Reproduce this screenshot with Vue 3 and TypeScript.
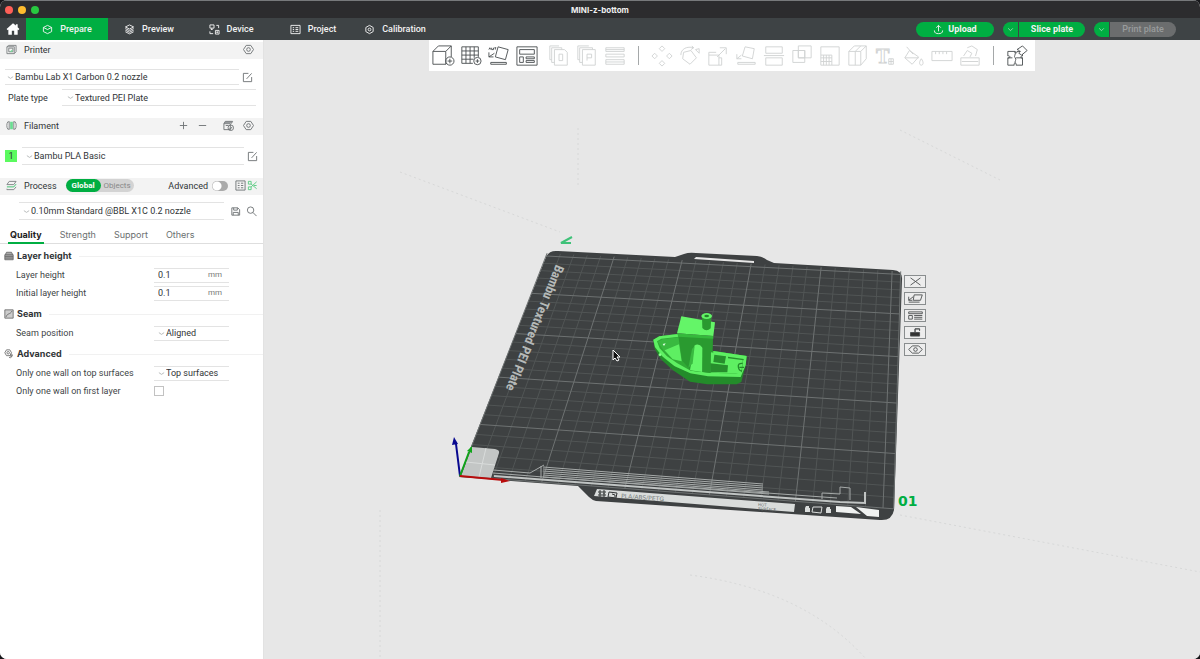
<script setup lang="ts">
import { ref } from 'vue'

interface Icon {
  name: string
  d: string
  fill?: string
  letter?: string
}

const mainTabs: Icon[] = [
  { name: 'Prepare', d: 'M12 3 21 7.5V16.500L12 21 3 16.500V7.500ZM3 7.500 12 12 21 7.500' },
  { name: 'Preview', d: 'M12 2 21 6.500 12 11 3 6.500ZM3 10 12 14.500 21 10M3 13.500 12 18 21 13.500M3 17 12 21.500 21 17' },
  { name: 'Device', d: 'M2 2H11V9H2ZM14 14H22V22H14ZM6 9V12M16 3H21V9M2 16V21H9M17 17H19V19H17ZM4 12H8' },
  { name: 'Project', d: 'M2 3H22V21H2ZM6 8H9M6 12H9M6 16H9M12 8H18M12 12H18M12 16H18' },
  { name: 'Calibration', d: 'M12 3 20 7.500V16.500L12 21 4 16.500V7.500ZM12 9A3 3 0 1 0 12 15A3 3 0 1 0 12 9Z' },
]
const activeTab = ref('Prepare')

const createTools: Icon[] = [
  { name: 'Add model', d: 'M1 7H15V21H1ZM1 7 7 1H21L15 7M21 1V13M15 21 16 20M19.500 13A4.500 4.500 0 1 0 19.500 22A4.500 4.500 0 1 0 19.500 13ZM19.500 15V20M17 17.500H22' },
  { name: 'Add plate', d: 'M2 2H20V13M2 2V20H14M2 6.500H20M2 11H20M2 15.500H15M6.500 2V20M11 2V20M15.500 2V14M19 13.500A4 4 0 1 0 19 21.500A4 4 0 1 0 19 13.500ZM19 15.500V19.500M17 17.500H21' },
  { name: 'Auto orient', d: 'M11 2 22 5 19 16 8 13ZM1 8V13H6M1 13 7 9M3 19H20V21H3ZM1 5 2 3 3 5M4 3V5H6V3M7 3H9M8 3V5' },
  { name: 'Arrange all', d: 'M1 2H23V22H1ZM4 5H20V10H4ZM4 13H8V19H4ZM11 13H20V15H11ZM11 17H20V19H11Z' },
]
const editTools: Icon[] = [
  { name: 'Copy', d: 'M7 5H18L21 8V22H7ZM7 19H4V3H15V5M4 16H2V1H12M12 10H16V17H12Z' },
  { name: 'Paste', d: 'M7 5H21V22H7ZM7 19H4V3H18V5M4 16H2V1H14M12 17V10H17V14H12' },
  { name: 'Layers', d: 'M2 3H22V7H2ZM2 10H22V13H2ZM2 16H22V21H2ZM2 18.500H22M2 5H22' },
]
const modelTools: Icon[] = [
  { name: 'Move', d: 'M12 1 15 4 12 7 9 4ZM12 17 15 20 12 23 9 20ZM4 9 7 12 4 15 1 12ZM20 9 23 12 20 15 17 12Z' },
  { name: 'Rotate', d: 'M5 8 13 6 19 14 12 21 4 15ZM2 11C2 4 9 1 16 3L14 1M16 3 13 5M18 5 22 4V9Z' },
  { name: 'Scale', d: 'M2 11H13V22H2ZM2 11V8H10M13 14H16V22H13M11 13 20 4M14 3H21V10' },
  { name: 'Lay flat', d: 'M11 2 21 4 19 15 8 12ZM2 10V15H7M2 15 7 11M3 19H22V21H3Z' },
  { name: 'Cut', d: 'M3 2H21V9H3ZM3 14H21V22H3ZM1 11.500H23' },
  { name: 'Boolean', d: 'M2 6H15V19H2ZM8 1H22V14H8ZM8 6H15V14H8Z' },
  { name: 'Supports', d: 'M2 2H22V22H14V11H2ZM2 11V22H14M5 11V22M8 11V22M11 11V22M2 14H14M2 18H14' },
  { name: 'Seam', d: 'M2 7H15V22H2ZM2 7 8 1H21L15 7M21 1V15L15 22M9 7V22M9 7 15 1' },
  { name: 'Text shape', d: 'M15 15H20V21H15ZM15 18H20M17.500 15V21', letter: 'T' },
  { name: 'Paint', d: 'M7 6 17 13 10 21 2 14ZM4 2 11 10M2 14H17M20 15C23 19 22 22 20 22S17 19 20 15Z' },
  { name: 'Measure', d: 'M1 7H23V17H1ZM5 7V10M9 7V10M13 7V10M17 7V10' },
  { name: 'Assembly tools', d: 'M2 14H22V22H2ZM3 18H21M5 12 9 6 14 9 12 13M9 3 14 1 20 5 18 12' },
]
const assembly: Icon = {
  name: 'Assembly view',
  d: 'M2 7H10C9 9 12 10 12 7H16M2 7V12C5 11 5 15 2 14V22H9C8 19 12 19 11 22H18V14C16 15 15 12 18 12V10M10 7C11 11 8 12 10 14C12 16 9 18 10 20M2 14H7M11 14H18M12 5 18 1 23 6 17 11 14 9C16 7 14 5 12 5Z',
}

const parameterTabs = ['Quality', 'Strength', 'Support', 'Others']
const parameterTab = ref('Quality')
const advanced = ref(false)
const oneWallFirst = ref(false)
const layerHeight = ref('0.1')
const initialHeight = ref('0.1')

type Point = [number, number]

// Build plate corners on screen: front left, front right, back right, back left.
const corners: Point[] = [[460, 476], [883, 508], [892, 274], [546, 256]]
const plateSize = 250

function project(mx: number, my: number): Point {
  const [a, b, c, d] = corners
  const u = mx / plateSize
  const v = my / plateSize
  const dx1 = b[0] - c[0]
  const dy1 = b[1] - c[1]
  const dx2 = d[0] - c[0]
  const dy2 = d[1] - c[1]
  const sx = a[0] - b[0] + c[0] - d[0]
  const sy = a[1] - b[1] + c[1] - d[1]
  const det = dx1 * dy2 - dx2 * dy1
  const g = (sx * dy2 - dx2 * sy) / det
  const h = (dx1 * sy - sx * dy1) / det
  const w = g * u + h * v + 1
  return [
    ((b[0] - a[0] + g * b[0]) * u + (d[0] - a[0] + h * d[0]) * v + a[0]) / w,
    ((b[1] - a[1] + g * b[1]) * u + (d[1] - a[1] + h * d[1]) * v + a[1]) / w,
  ]
}

function segment(x1: number, y1: number, x2: number, y2: number): string {
  return `M${project(x1, y1).join(' ')}L${project(x2, y2).join(' ')}`
}

function gridPath(major: boolean): string {
  let path = ''
  for (let i = 0; i <= plateSize; i += 10) {
    if ((i % 50 === 0) === major) {
      path += segment(i, 0, i, 254) + segment(0, i, 256, i)
    }
  }
  return path
}
const majorGrid = gridPath(true) + segment(256, 0, 256, 254)
const minorGrid = gridPath(false)
const stripes = [0, 1, 2, 3, 4, 5]

const plateTools: Icon[] = [
  { name: 'Remove plate', d: 'M5 2 16 10M16 2 5 10' },
  { name: 'Orient plate', d: 'M9 2H18L16 8H8ZM3 4V8H7M3 8 8 4M3 10H15' },
  { name: 'Arrange plate', d: 'M3 2H18V4H3ZM3 6H7V10H3ZM9 6H18M9 8H18M9 10H18' },
  { name: 'Lock plate', d: 'M5 6H15V10H5ZM10 6V2H15V4V2H10Z', fill: '#333' },
  { name: 'Plate settings', d: 'M7 2H14L18 6 14 10H7L3 6ZM10.500 4A2 2 0 1 0 10.500 8A2 2 0 1 0 10.500 4Z' },
]
</script>

<template>
  <div class="window">
    <header class="titlebar">
      <span class="lights"><i class="red"></i><i class="amber"></i><i class="lime"></i></span>
      <h1>MINI-z-bottom</h1>
    </header>

    <nav class="menubar">
      <button class="home" aria-label="Home">
        <svg viewBox="0 0 24 24"><path d="M12 2 1 12 3 14 4 13V22H10V15H14V22H20V13L21 14 23 12 20 9V4H17V6Z" fill="#fff" /></svg>
      </button>
      <button
        v-for="tab in mainTabs"
        :key="tab.name"
        class="main-tab"
        :class="{ active: activeTab === tab.name }"
        @click="activeTab = tab.name"
      >
        <svg class="line-icon" viewBox="0 0 24 24"><path :d="tab.d" /></svg>{{ tab.name }}
      </button>
      <div class="actions">
        <button class="pill upload">
          <svg class="line-icon" viewBox="0 0 24 24"><path d="M12 16V3M7 8 12 3 17 8M3 14C3 20 7 21 12 21S21 20 21 14" /></svg>Upload
        </button>
        <div class="split">
          <button class="arrow" aria-label="Slice options"><svg class="line-icon" viewBox="0 0 12 12"><path d="M2 4 6 8 10 4" /></svg></button>
          <button class="main">Slice plate</button>
        </div>
        <div class="split">
          <button class="arrow" aria-label="Print options"><svg class="line-icon" viewBox="0 0 12 12"><path d="M2 4 6 8 10 4" /></svg></button>
          <button class="main" disabled>Print plate</button>
        </div>
      </div>
    </nav>

    <div class="body">
      <aside class="sidebar">
        <div class="section-head">
          <svg class="head-icon" viewBox="0 0 24 24"><path d="M2 6H18V21H2ZM2 6 6 3H22V17L18 21M6 9H15V17H6Z" /><path class="accent" d="M8 17 14 12V17Z" /></svg>
          <h2>Printer</h2>
          <button class="icon-button push" aria-label="Printer settings">
            <svg viewBox="0 0 24 24"><path d="M7 3H17L23 12 17 21H7L1 12ZM12 8A4 4 0 1 0 12 16A4 4 0 1 0 12 8Z" /></svg>
          </button>
        </div>
        <div class="row printer">
          <label class="combo">
            <svg class="chevron" viewBox="0 0 8 8"><path d="M1 3 4 5 7 3" /></svg>
            <select aria-label="Printer"><option>Bambu Lab X1 Carbon 0.2 nozzle</option></select>
          </label>
          <button class="icon-button" aria-label="Edit printer">
            <svg viewBox="0 0 24 24"><path d="M14 3H3V21H21V11M10 15 21 3" /></svg>
          </button>
        </div>
        <div class="row plate">
          <label for="plate-type">Plate type</label>
          <span class="combo">
            <svg class="chevron" viewBox="0 0 8 8"><path d="M1 3 4 5 7 3" /></svg>
            <select id="plate-type"><option>Textured PEI Plate</option></select>
          </span>
        </div>

        <div class="section-head">
          <svg class="head-icon" viewBox="0 0 24 24"><path d="M4 4C1 8 1 16 4 20M20 4C23 8 23 16 20 20M7 3V21M17 3V21M4 4H7M4 20H7M17 4H20M17 20H20" /><path class="accent" d="M9 4H15V20H9Z" /></svg>
          <h2>Filament</h2>
          <button class="icon-button push" aria-label="Add filament"><svg viewBox="0 0 24 24"><path d="M12 4V20M4 12H20" /></svg></button>
          <button class="icon-button wide" aria-label="Remove filament"><svg viewBox="0 0 24 24"><path d="M4 12H20" /></svg></button>
          <button class="icon-button wider" aria-label="Sync filament">
            <svg viewBox="0 0 24 24"><path d="M2 8H16V21H2ZM2 8 5 3H21L18 8M4 5H19M6 12H12M17 11A6 6 0 1 0 17 23A6 6 0 1 0 17 11ZM14 18 16 20 20 15" /></svg>
          </button>
          <button class="icon-button" aria-label="Filament settings">
            <svg viewBox="0 0 24 24"><path d="M7 3H17L23 12 17 21H7L1 12ZM12 8A4 4 0 1 0 12 16A4 4 0 1 0 12 8Z" /></svg>
          </button>
        </div>
        <div class="row filament">
          <span class="swatch">1</span>
          <label class="combo">
            <svg class="chevron" viewBox="0 0 8 8"><path d="M1 3 4 5 7 3" /></svg>
            <select aria-label="Filament"><option>Bambu PLA Basic</option></select>
          </label>
          <button class="icon-button" aria-label="Edit filament">
            <svg viewBox="0 0 24 24"><path d="M14 3H3V21H21V11M10 15 21 3" /></svg>
          </button>
        </div>

        <div class="section-head">
          <svg class="head-icon" viewBox="0 0 24 24"><path d="M7 3H22L17 10H2ZM2 19V21H17L22 15" /><path class="accent-line" d="M2 15H17L22 9" /></svg>
          <h2>Process</h2>
          <div class="scope"><button class="on">Global</button><button>Objects</button></div>
          <label class="advanced push">Advanced<input v-model="advanced" type="checkbox" /></label>
          <button class="icon-button" aria-label="Parameter list">
            <svg viewBox="0 0 24 24"><path d="M2 2H22V22H2ZM6 7H10M6 12H10M6 17H10M13 7H18M13 12H18M13 17H18" /></svg>
          </button>
          <button class="icon-button compare" aria-label="Compare presets">
            <svg viewBox="0 0 24 24"><path d="M3 3H9V9H3ZM3 15H9V21H3ZM9 9 21 19M9 15 21 4M15 12H21" /></svg>
          </button>
        </div>
        <div class="row process">
          <label class="combo">
            <svg class="chevron" viewBox="0 0 8 8"><path d="M1 3 4 5 7 3" /></svg>
            <select aria-label="Process"><option>0.10mm Standard @BBL X1C 0.2 nozzle</option></select>
          </label>
          <button class="icon-button" aria-label="Save preset">
            <svg viewBox="0 0 24 24"><path d="M4 4H17L21 8V20H4ZM8 4V9H16V4M7 20V14H18V20" /></svg>
          </button>
          <button class="icon-button" aria-label="Search">
            <svg viewBox="0 0 24 24"><path d="M10 2A7 7 0 1 0 10 16A7 7 0 1 0 10 2ZM15 14 23 22" /></svg>
          </button>
        </div>

        <div class="parameter-tabs">
          <button
            v-for="tab in parameterTabs"
            :key="tab"
            :class="{ selected: parameterTab === tab }"
            @click="parameterTab = tab"
          >{{ tab }}</button>
        </div>

        <section class="group">
          <h3>
            <svg viewBox="0 0 24 24"><path d="M3 9 6 3H18L21 9M2 9H22V21H2Z" fill="#aaa" /><path d="M2 13H22M2 17H22" /></svg>
            Layer height
          </h3>
          <div class="field">
            <label for="layer-height">Layer height</label>
            <span class="value"><input id="layer-height" v-model="layerHeight" type="text" /><small>mm</small></span>
          </div>
          <div class="field">
            <label for="initial-height">Initial layer height</label>
            <span class="value"><input id="initial-height" v-model="initialHeight" type="text" /><small>mm</small></span>
          </div>
        </section>
        <section class="group">
          <h3>
            <svg viewBox="0 0 24 24"><path d="M2 2H22V22H2Z" fill="#ccc" /><path d="M5 19C8 9 15 14 19 5" /></svg>
            Seam
          </h3>
          <div class="field">
            <label for="seam">Seam position</label>
            <span class="value">
              <svg class="chevron" viewBox="0 0 8 8"><path d="M1 3 4 5 7 3" /></svg>
              <select id="seam"><option>Aligned</option></select>
            </span>
          </div>
        </section>
        <section class="group">
          <h3>
            <svg viewBox="0 0 24 24"><path d="M6 2H14L18 9 14 16H6L2 9ZM10 6A3 3 0 1 0 10 12A3 3 0 1 0 10 6ZM17 11A5 5 0 1 1 12 20M17 14A2 2 0 1 0 17 18A2 2 0 1 0 17 14Z" /></svg>
            Advanced
          </h3>
          <div class="field">
            <label for="one-wall-top">Only one wall on top surfaces</label>
            <span class="value">
              <svg class="chevron" viewBox="0 0 8 8"><path d="M1 3 4 5 7 3" /></svg>
              <select id="one-wall-top"><option>Top surfaces</option></select>
            </span>
          </div>
          <div class="field">
            <label for="one-wall-first">Only one wall on first layer</label>
            <input id="one-wall-first" v-model="oneWallFirst" class="tick" type="checkbox" />
          </div>
        </section>
      </aside>

      <main class="viewport">
        <svg class="scene" viewBox="264 40 936 619" preserveAspectRatio="xMidYMid meet">
          <g class="traces">
            <path d="M380 510V659M578 128V188M690 575Q805 590 866 659M900 130L1000 180M400 172L560 232M900 515L1200 572" />
          </g>

          <path
            class="plate-body"
            d="M459 477 546 257Q549 250 558 251L675 257 684 254Q689 252 696 253L757 256Q764 257 767 260L774 263 893 270Q903 271 902 280L894 510Q892 521 880 520L596 501Q592 500 589 497L578 486Z"
          />
          <path d="M696 257 754 261V263L694 259Z" fill="#e7e7e7" />
          <path class="grid-minor" :d="minorGrid" />
          <path class="grid-major" :d="majorGrid" />

          <path d="M472 447 495 449Q500 450 499 453L491 478 461 476Z" fill="#c3c6c5" />
          <path d="M466 462 495 465M486 448 479 477" stroke="#d9dcdb" fill="none" />

          <g class="prints">
            <path v-for="i in stripes" :key="i" :d="`M543 ${467 + i * 2}L${763 + (i > 3 ? 6 : 0)} ${484 + i * 2}`" />
            <path d="M493 470 530 473 544 465M493 473 543 477M541 466V478" />
            <path d="M494 476 840 502 865 503V492" class="thick" />
            <path d="M543 477 837 498M822 499V493L840 494V487L850 488V500" />
          </g>

          <path d="M597 489 795 504 794 512 594 496Z" fill="#d9dcdb" />
          <path d="M599 491H601V493H599ZM603 491H605V493H603ZM599 494H601V496H599ZM603 494H605V496H603ZM609 492 617 493 616 498 608 497ZM612 494 615 495V497" fill="none" stroke="#333637" />
          <text class="plate-label" transform="translate(621 498) rotate(4)">PLA/ABS/PETG</text>
          <text class="plate-note" transform="translate(758 506) rotate(4)">HOT</text>
          <text class="plate-note" transform="translate(758 510) rotate(4)">SURFACE</text>
          <path d="M806 506H809V508H810V512H805V508ZM827 507H830V509H831V513H826V509Z" fill="#d9dcdb" />
          <path d="M813 507 822 507 821 513 812 512Z" fill="none" stroke="#d9dcdb" />
          <path d="M836 506 851 507 861 514 836 512ZM856 507 879 510V517L867 516Z" fill="#eff1f0" />

          <text class="plate-name" transform="translate(556 264) rotate(112)">Bambu Textured PEI Plate</text>
          <text class="plate-number" x="898" y="506">01</text>
          <path d="M572 237 561 243 571 243" class="mark" />

          <g class="boat" transform="translate(640 300) scale(.33333)">
            <path d="M40 119 58 109 112 102 220 153 320 168 317 196 304 246 290 253 202 253 150 245 99 211 62 177 44 146Z" fill="#238b2a" />
            <path d="M40 119 45 142 72 175 108 201 155 220 209 225 304 222 317 190 320 168 220 153 112 103 58 109Z" fill="#30aa35" />
            <path d="M40 119 58 109 114 102 116 110 64 116 51 124 59 145 81 169 112 190 152 212 215 218 288 221 306 216 309 178 220 164 220 153 320 168 317 196 302 231 204 229 151 220 103 198 66 168 45 141Z" fill="#5eef62" />
            <path d="M53 125 69 118 117 112 126 182 101 177 72 153Z" fill="#39b940" />
            <path d="M74 151 117 133 125 184 98 178Z" fill="#5eef62" />
            <path d="M114 101 219 109 216 219 152 212 126 181Z" fill="#2a9a30" />
            <path d="M163 137Q176 128 188 144L187 216 150 211Z" fill="#65f66a" />
            <path d="M156 147 164 138 158 190 145 204Z" fill="#39b940" />
            <path d="M188 112 218 114 213 218 187 216Z" fill="#2a9a30" />
            <path d="M213 157 309 174 303 221 212 218Z" fill="#5eef62" />
            <path d="M223 164 258 169 254 191 220 186Z" fill="#278e2d" />
            <path d="M211 190 264 196 262 217 211 217Z" fill="#278e2d" />
            <path d="M264 170 311 177V181L264 175Z" fill="#278e2d" />
            <path d="M308 190Q293 189 295 201T306 213M298 202H312" stroke="#238b2a" stroke-width="4" fill="none" />
            <path d="M124 49 225 67 220 108 111 100Z" fill="#64f568" />
            <path d="M111 100 220 108 220 116 115 110Z" fill="#35b93c" />
            <path d="M186 47 214 49 212 85Q199 97 187 84Z" fill="#2a9a30" />
            <ellipse cx="200" cy="48" rx="16" ry="9" fill="#63f467" />
            <ellipse cx="200" cy="48" rx="7" ry="4" fill="#24832a" />
            <path d="M68 132 77 130 72 138Z" fill="#dfffe0" />
            <circle cx="60" cy="164" r="4" fill="#88ff8c" />
          </g>

          <g class="axes">
            <path d="M460 476 456 444" stroke="#08088f" /><path d="M454 437 458 444 452 445Z" fill="#08088f" />
            <path d="M460 476 469 452" stroke="#10a51a" /><path d="M472 446 472 453 467 451Z" fill="#10a51a" />
            <path d="M460 476 503 480" stroke="#b80b0b" /><path d="M510 481 501 483V478Z" fill="#b80b0b" />
          </g>
          <path d="M613 350V360L615 358 617 361 619 360 617 357H620Z" fill="#111" stroke="#fff" />

          <foreignObject x="902" y="274" width="28" height="88">
            <div class="plate-tools">
              <button v-for="tool in plateTools" :key="tool.name" :aria-label="tool.name">
                <svg viewBox="0 0 21 12"><path :d="tool.d" :fill="tool.fill ?? 'none'" /></svg>
              </button>
            </div>
          </foreignObject>
        </svg>

        <div class="toolbar">
          <button v-for="tool in createTools" :key="tool.name" :aria-label="tool.name">
            <svg viewBox="0 0 24 24"><path :d="tool.d" /></svg>
          </button>
          <span class="space"></span>
          <button v-for="tool in editTools" :key="tool.name" :aria-label="tool.name" disabled>
            <svg viewBox="0 0 24 24"><path :d="tool.d" /></svg>
          </button>
          <span class="divider"></span>
          <button v-for="tool in modelTools" :key="tool.name" :aria-label="tool.name" disabled>
            <svg viewBox="0 0 24 24"><path :d="tool.d" /><text v-if="tool.letter" x="1" y="20">{{ tool.letter }}</text></svg>
          </button>
          <span class="divider"></span>
          <button :aria-label="assembly.name"><svg viewBox="0 0 24 24"><path :d="assembly.d" /></svg></button>
        </div>
      </main>
    </div>
  </div>
</template>

<style>
body {
  margin: 0;
  background: #17171a;
}
</style>

<style scoped>
.window {
  display: flex;
  flex-direction: column;
  min-height: 100vh;
  box-sizing: border-box;
  overflow: hidden;
  border-radius: 7px;
  background: #fff;
  color: #303436;
  font: 9px/12px Roboto, "Liberation Sans", sans-serif;
}
button, select, input {
  font: inherit;
  color: inherit;
  margin: 0;
  padding: 0;
  border: 0;
  background: none;
}
button { display: flex; align-items: center; justify-content: center; }
svg { display: block; flex: none; }
h1, h2, h3 { margin: 0; font-size: 9px; line-height: 12px; }
h2 { font-weight: 400; }

.titlebar {
  display: grid;
  grid-template-columns: 1fr auto 1fr;
  align-items: center;
  height: 18px;
  box-sizing: border-box;
  border-top: 1px solid #77797b;
  background: #2c2c2e;
  color: #f0f0f0;
}
.titlebar h1 { font: 700 8px/12px Inter, sans-serif; }
.lights { display: flex; gap: 5px; padding-left: 5px; }
.lights i { width: 8px; height: 8px; border-radius: 50%; }
.red { background: #ff5f57; }
.amber { background: #febc2e; }
.lime { background: #28c840; }

.menubar { display: flex; height: 22px; background: #3e4345; color: #f3f3f3; font-weight: 500; }
.home { width: 26px; }
.home svg { width: 14px; height: 14px; }
.main-tab { width: 82px; gap: 7px; }
.main-tab.active { background: #00ae42; }
.line-icon { width: 11px; height: 11px; fill: none; stroke: currentColor; stroke-width: 2; }
.actions { display: flex; align-items: center; gap: 9px; margin-left: auto; margin-right: 24px; }
.pill, .split button { height: 15px; background: #00ae42; }
.pill { width: 78px; gap: 4px; border-radius: 8px; font-weight: 700; }
.split { display: flex; gap: 1px; font-weight: 700; }
.arrow { width: 15px; border-radius: 8px 0 0 8px; }
.arrow .line-icon { width: 7px; height: 7px; stroke-width: 1; }
.split .main { width: 66px; border-radius: 0 8px 8px 0; }
.split .main:disabled { background: #6b6d6e; color: #999c9d; font-weight: 500; }

.body { display: flex; flex: 1; }
.sidebar {
  width: 264px;
  flex: none;
  box-sizing: border-box;
  padding-top: 2px;
  border-right: 1px solid #e2e2e2;
  background: #fff;
}
.section-head {
  display: flex;
  align-items: center;
  height: 17px;
  box-sizing: border-box;
  padding: 0 9px 2px 6px;
  background: #f3f3f3;
}
.section-head h2 { margin-left: 7px; }
.head-icon { width: 11px; height: 11px; fill: none; stroke: #7d8182; stroke-width: 2; }
.head-icon .accent { fill: #6cdc92; stroke: none; }
.head-icon .accent-line { stroke: #35bd68; }
.push { margin-left: auto; }
.icon-button { width: 12px; height: 12px; }
.icon-button svg { width: 11px; height: 11px; fill: none; stroke: #6e7375; stroke-width: 2; }
.icon-button.wide { margin: 0 14px 0 7px; }
.icon-button.wider { margin-right: 8px; }
.icon-button.compare svg { stroke: #59cc81; }
.row { display: flex; align-items: center; }
.combo, .value {
  display: flex;
  align-items: center;
  box-sizing: border-box;
  border-top: 1px solid #e3e3e3;
  border-bottom: 1px solid #e3e3e3;
}
.combo { flex: 1; height: 100%; }
.chevron { width: 7px; height: 7px; margin-right: 1px; fill: none; stroke: #b0b3b4; }
select { appearance: none; flex: 1; min-width: 0; }
.printer { height: 16px; margin-top: 10px; padding: 0 10px 0 5px; }
.printer .combo { padding-left: 2px; }
.printer .combo, .filament .combo { margin-right: 2px; }
.plate { height: 17px; margin-top: 4px; margin-bottom: 12px; padding: 0 7px 0 8px; }
.plate label { width: 54px; }
.plate .combo { padding-left: 5px; }
.filament { height: 18px; margin-top: 12px; margin-bottom: 13px; padding: 0 5px; }
.swatch { width: 12px; height: 12px; margin-right: 5px; background: #5bfa5f; text-align: center; }
.filament .combo { padding-left: 4px; }
.scope { display: flex; margin-left: 9px; border-radius: 7px; background: #d3d3d3; color: #888; font-size: 8px; }
.scope button { width: 33px; height: 13px; border-radius: 7px; }
.scope .on { width: 35px; background: #00ae42; color: #fff; font-weight: 700; }
.advanced { display: flex; align-items: center; gap: 4px; margin-right: 6px; }
.advanced input {
  appearance: none;
  width: 16px;
  height: 10px;
  border-radius: 5px;
  background: radial-gradient(circle at 5px 5px, #fff 4px, #aaa 5px);
}
.advanced input:checked { background: radial-gradient(circle at 11px 5px, #fff 4px, #00ae42 5px); }
.section-head .compare { margin-right: -4px; }
.process { height: 18px; margin-top: 7px; padding: 0 6px 0 19px; }
.process .combo { margin-right: 5px; padding-left: 4px; }
.process .icon-button + .icon-button { margin-left: 4px; }
.parameter-tabs {
  display: flex;
  gap: 14px;
  height: 17px;
  margin-top: 7px;
  padding-left: 8px;
  box-sizing: border-box;
  border-bottom: 1px solid #dedede;
  color: #6b6f70;
  font-family: Inter, sans-serif;
}
.parameter-tabs button { height: 17px; padding: 0 2px; box-sizing: border-box; border-bottom: 2px solid transparent; }
.parameter-tabs .selected { border-color: #00ae42; color: #222; font-weight: 700; }

.group { margin-top: 4px; }
.group h3 {
  display: flex;
  align-items: center;
  gap: 3px;
  height: 16px;
  margin-bottom: 2px;
  padding-left: 4px;
  font-family: Inter, sans-serif;
}
.group h3::after { content: ""; flex: 1; height: 1px; margin-left: 4px; background: #f1f1f1; }
.group h3 svg { width: 10px; height: 10px; fill: none; stroke: #666; stroke-width: 2; }
.field { display: flex; align-items: center; height: 18px; padding-left: 16px; }
.field label { width: 138px; color: #414547; }
.value { width: 75px; height: 15px; padding: 0 7px 0 4px; }
.value input { width: 40px; flex: 1; }
.value small { font-size: 8px; color: #777; }
.tick { appearance: none; width: 10px; height: 10px; border: 1px solid #c2c2c2; }
.tick:checked { background: #00ae42; }

.viewport { position: relative; flex: 1; min-width: 0; background: #e7e7e7; }
.scene { width: 100%; height: 100%; }
.toolbar {
  position: absolute;
  top: 0;
  left: 50%;
  transform: translateX(-50%);
  display: flex;
  align-items: center;
  height: 31px;
  padding-right: 4px;
  background: #fff;
}
.toolbar button { width: 28px; height: 28px; }
.toolbar svg { width: 22px; height: 22px; fill: none; stroke: #4b5052; stroke-width: 1; overflow: visible; }
.toolbar button:disabled svg { stroke: #d0d2d2; }
.toolbar text { font: 700 22px "Liberation Serif", serif; }
.space { width: 4px; }
.divider { width: 1px; height: 19px; margin: 0 9px; background: #a5a8a9; }

.traces path { fill: none; stroke: #d7d8d8; stroke-dasharray: 2 3; }
.plate-body { fill: #3e4142; }
.grid-minor { fill: none; stroke: #515555; }
.grid-major { fill: none; stroke: #6e7272; }
.prints path { fill: none; stroke: #a6aaa9; }
.prints .thick { stroke: #c0c4c3; stroke-width: 2; }
.plate-name { font: 700 13px "Roboto Condensed", Roboto, sans-serif; fill: #b5b9b8; }
.plate-label { font: 6px "DejaVu Sans", sans-serif; fill: #777c7b; }
.plate-note { font: 4px "DejaVu Sans", sans-serif; fill: #666b6a; }
.plate-number { font: 700 14px "DejaVu Sans", sans-serif; fill: #00ae42; }
.mark { fill: none; stroke: #3fc279; stroke-width: 2; }
.axes path { stroke-width: 2; }
.plate-tools { display: flex; flex-direction: column; gap: 4px; padding: 1px 2px; }
.plate-tools button { width: 22px; height: 13px; box-sizing: border-box; border: 1px solid #898d8e; background: #ededed; }
.plate-tools svg { width: 19px; height: 11px; stroke: #4c5051; }
</style>
